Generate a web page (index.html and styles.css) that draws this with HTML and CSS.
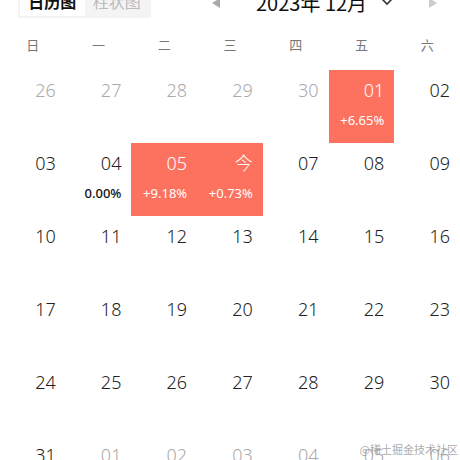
FILE: index.html
```html
<!DOCTYPE html>
<html lang="zh">
<head>
<meta charset="utf-8">
<link rel="stylesheet" href="styles.css">
</head>
<body>
<div class="page">
  <div class="header">
    <div class="seg">
      <span class="seg-item active">日历图</span>
      <span class="seg-item">柱状图</span>
    </div>
    <div class="nav">
      <span class="tri tri-left"></span>
      <span class="title">2023年 12月</span>
      <svg class="chev" width="12" height="8" viewBox="0 0 12 8"><path d="M1.5 1.5 L6 6 L10.5 1.5" fill="none" stroke="#333" stroke-width="1.6"/></svg>
      <span class="tri tri-right"></span>
    </div>
  </div>
  <div class="weekdays">
    <span>日</span><span>一</span><span>二</span><span>三</span><span>四</span><span>五</span><span>六</span>
  </div>
  <div class="grid">
    <div class="cell other"><span class="num">26</span></div>
    <div class="cell other"><span class="num">27</span></div>
    <div class="cell other"><span class="num">28</span></div>
    <div class="cell other"><span class="num">29</span></div>
    <div class="cell other"><span class="num">30</span></div>
    <div class="cell hot"><span class="num">01</span><span class="pct">+6.65%</span></div>
    <div class="cell"><span class="num">02</span></div>

    <div class="cell"><span class="num">03</span></div>
    <div class="cell"><span class="num">04</span><span class="pct">0.00%</span></div>
    <div class="cell hot"><span class="num">05</span><span class="pct">+9.18%</span></div>
    <div class="cell hot"><span class="num">今</span><span class="pct">+0.73%</span></div>
    <div class="cell"><span class="num">07</span></div>
    <div class="cell"><span class="num">08</span></div>
    <div class="cell"><span class="num">09</span></div>

    <div class="cell"><span class="num">10</span></div>
    <div class="cell"><span class="num">11</span></div>
    <div class="cell"><span class="num">12</span></div>
    <div class="cell"><span class="num">13</span></div>
    <div class="cell"><span class="num">14</span></div>
    <div class="cell"><span class="num">15</span></div>
    <div class="cell"><span class="num">16</span></div>

    <div class="cell"><span class="num">17</span></div>
    <div class="cell"><span class="num">18</span></div>
    <div class="cell"><span class="num">19</span></div>
    <div class="cell"><span class="num">20</span></div>
    <div class="cell"><span class="num">21</span></div>
    <div class="cell"><span class="num">22</span></div>
    <div class="cell"><span class="num">23</span></div>

    <div class="cell"><span class="num">24</span></div>
    <div class="cell"><span class="num">25</span></div>
    <div class="cell"><span class="num">26</span></div>
    <div class="cell"><span class="num">27</span></div>
    <div class="cell"><span class="num">28</span></div>
    <div class="cell"><span class="num">29</span></div>
    <div class="cell"><span class="num">30</span></div>

    <div class="cell"><span class="num">31</span></div>
    <div class="cell other"><span class="num">01</span></div>
    <div class="cell other"><span class="num">02</span></div>
    <div class="cell other"><span class="num">03</span></div>
    <div class="cell other"><span class="num">04</span></div>
    <div class="cell other"><span class="num">05</span></div>
    <div class="cell other"><span class="num">06</span></div>
  </div>
  <div class="watermark">@稀土掘金技术社区</div>
</div>
</body>
</html>
```

FILE: styles.css
```css
* { box-sizing: border-box; }
html, body { margin: 0; padding: 0; background: #fff; }
body {
  width: 460px;
  height: 460px;
  overflow: hidden;
  font-family: "Noto Sans", "Noto Sans CJK SC", sans-serif;
  color: #222;
}
.page { position: relative; width: 460px; height: 460px; overflow: hidden; }

.header {
  display: flex;
  align-items: center;
  height: 30px;
  margin-top: -12px;
  padding-left: 18px;
}
.seg {
  display: flex;
  width: 133px;
  height: 30px;
  padding: 2px;
  background: #f4f4f4;
}
.seg-item {
  flex: 1;
  display: flex;
  align-items: center;
  justify-content: center;
  font-family: "Noto Sans CJK SC", sans-serif;
  font-size: 16px;
  line-height: 20px;
  padding-bottom: 4px;
  color: #bbb;
}
.seg-item.active {
  background: #fff;
  color: #111;
  font-weight: 700;
}
.nav {
  display: flex;
  align-items: center;
  margin-left: 61px;
}
.tri {
  width: 0;
  height: 0;
  border-top: 5px solid transparent;
  border-bottom: 5px solid transparent;
}
.tri-left { border-right: 8px solid #aaa; }
.tri-right { border-left: 8px solid #ccc; margin-left: 36px; }
.title {
  margin-left: 36px;
  margin-top: -1px;
  font-family: "Noto Sans CJK SC", sans-serif;
  font-size: 20px;
  line-height: 30px;
  color: #111;
}
.chev { margin-left: 14px; margin-top: -2px; }

.weekdays {
  display: grid;
  grid-template-columns: repeat(7, 1fr);
  height: 30px;
  margin-top: 12px;
  line-height: 30px;
  text-align: center;
  font-family: "Noto Sans CJK SC", sans-serif;
  font-size: 13px;
  color: #777;
}

.grid {
  display: grid;
  grid-template-columns: repeat(7, 1fr);
  grid-auto-rows: 73px;
  margin-top: 10px;
}
.cell {
  display: flex;
  flex-direction: column;
  align-items: flex-end;
  padding: 8px 10px 0 0;
}
.num {
  font-family: "Noto Sans", "Noto Sans CJK SC", sans-serif;
  font-weight: 300;
  font-size: 18px;
  line-height: 24px;
  color: #222;
}
.pct {
  margin-top: 9px;
  font-family: "Noto Sans", sans-serif;
  font-size: 13px;
  line-height: 18px;
  font-weight: 500;
  color: #111;
}
.cell.other .num { color: #aaa; }
.cell.hot { background: #fd725f; }
.cell.hot .num, .cell.hot .pct { color: #fff; }
.cell.hot .pct { font-weight: 400; }

.watermark {
  position: absolute;
  right: 2px;
  bottom: 3px;
  font-family: "Noto Sans CJK SC", sans-serif;
  font-size: 11px;
  color: rgba(150,150,150,0.8);
}
```
